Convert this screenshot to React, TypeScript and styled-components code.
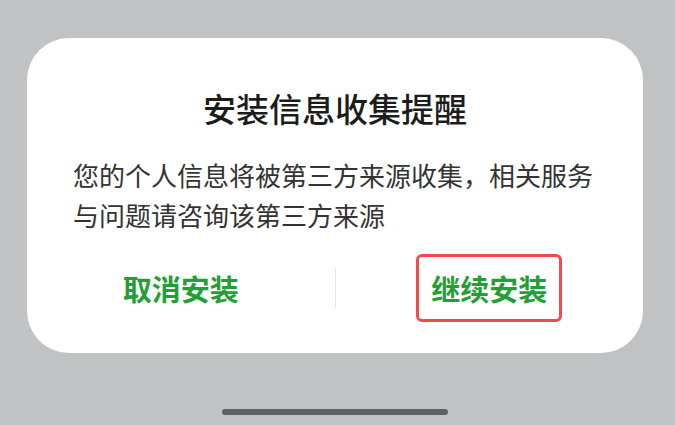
import styled, { createGlobalStyle } from 'styled-components'

const GlobalStyle = createGlobalStyle`
  html, body {
    margin: 0;
    padding: 0;
    background: #c1c2c4;
  }
  body {
    font-family: "Noto Sans CJK SC", "Noto Sans", sans-serif;
  }
`

const Screen = styled.div`
  width: 675px;
  height: 425px;
  display: flex;
  flex-direction: column;
  background: #c1c2c4;
  overflow: hidden;
`

const Card = styled.div`
  margin: 38px 0 0 27px;
  width: 616px;
  height: 315px;
  box-sizing: border-box;
  background: #ffffff;
  border-radius: 42px;
  padding: 50px 46px 0 46px;
  display: flex;
  flex-direction: column;
`

const Title = styled.h1`
  margin: 0;
  font-size: 33px;
  line-height: 40px;
  font-weight: 500;
  color: #1c1c1c;
  text-align: center;
`

const Message = styled.p`
  margin: 27px 0 0;
  font-size: 26px;
  line-height: 40px;
  color: #333333;
  text-align: left;
`

const Actions = styled.div`
  margin: 19px -46px 0;
  display: flex;
  align-items: center;
`

const Half = styled.div`
  flex: 1;
  display: flex;
  justify-content: center;
`

const Divider = styled.div`
  width: 1px;
  height: 40px;
  background: #e4e4e4;
`

const ActionButton = styled.button<{ $highlight?: boolean }>`
  font-family: inherit;
  font-size: 29px;
  font-weight: 700;
  line-height: 62px;
  color: #23a035;
  background: transparent;
  padding: 0 12px;
  border: 3px solid ${p => (p.$highlight ? '#f04a4a' : 'transparent')};
  border-radius: 6px;
  cursor: pointer;
`

const HomeBar = styled.div`
  margin: auto 0 10px 222px;
  width: 226px;
  height: 6px;
  border-radius: 3px;
  background: #5f6062;
`

function App() {
  return (
    <>
      <GlobalStyle />
      <Screen>
        <Card>
          <Title>安装信息收集提醒</Title>
          <Message>您的个人信息将被第三方来源收集，相关服务与问题请咨询该第三方来源</Message>
          <Actions>
            <Half>
              <ActionButton>取消安装</ActionButton>
            </Half>
            <Divider />
            <Half>
              <ActionButton $highlight>继续安装</ActionButton>
            </Half>
          </Actions>
        </Card>
        <HomeBar />
      </Screen>
    </>
  )
}

export default App
